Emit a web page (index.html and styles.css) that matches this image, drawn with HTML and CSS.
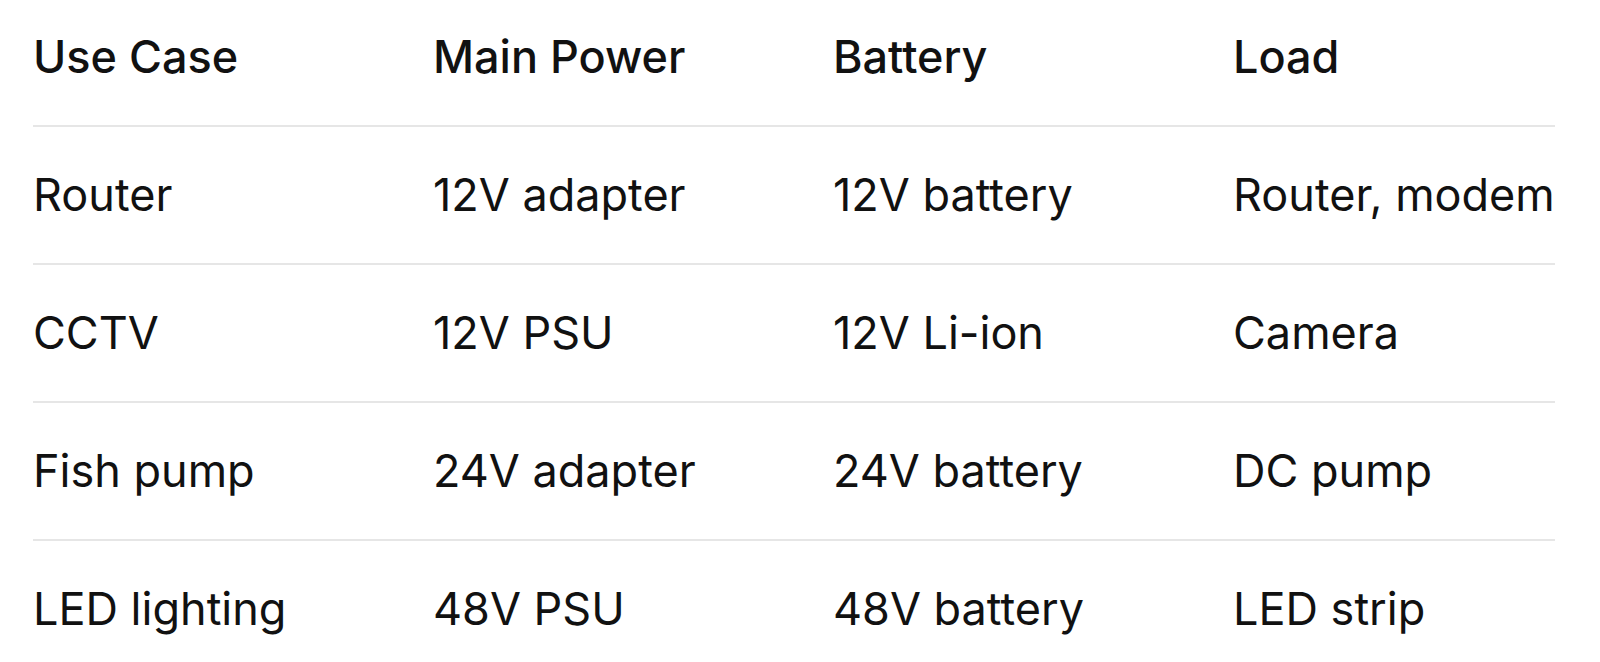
FILE: index.html
```html
<!DOCTYPE html>
<html lang="en">
<head>
<meta charset="utf-8">
<title>Use cases</title>
<link rel="stylesheet" href="styles.css">
</head>
<body>
<table class="spec">
  <thead>
    <tr><th>Use Case</th><th>Main Power</th><th>Battery</th><th>Load</th></tr>
  </thead>
  <tbody>
    <tr><td>Router</td><td>12V adapter</td><td>12V battery</td><td>Router, modem</td></tr>
    <tr><td>CCTV</td><td>12V PSU</td><td>12V Li-ion</td><td>Camera</td></tr>
    <tr><td>Fish pump</td><td>24V adapter</td><td>24V battery</td><td>DC pump</td></tr>
    <tr><td>LED lighting</td><td>48V PSU</td><td>48V battery</td><td>LED strip</td></tr>
  </tbody>
</table>
</body>
</html>
```
FILE: styles.css
```css
html, body {
  margin: 0;
  padding: 0;
  background: #ffffff;
}
body {
  padding-left: 33px;
  font-family: Inter, "Noto Sans", sans-serif;
  color: #111111;
}
.spec {
  border-collapse: collapse;
  font-size: 45px;
  line-height: 60px;
}
.spec th, .spec td {
  text-align: left;
  padding: 38px 0 38px 0;
  width: 400px;
  white-space: nowrap;
}
.spec th:last-child, .spec td:last-child {
  width: auto;
}
.spec th {
  font-weight: 500;
  padding-top: 27px;
  padding-bottom: 38px;
}
.spec tr {
  border-bottom: 2px solid #e6e6e6;
}
.spec tbody tr:last-child {
  border-bottom: none;
}
```
